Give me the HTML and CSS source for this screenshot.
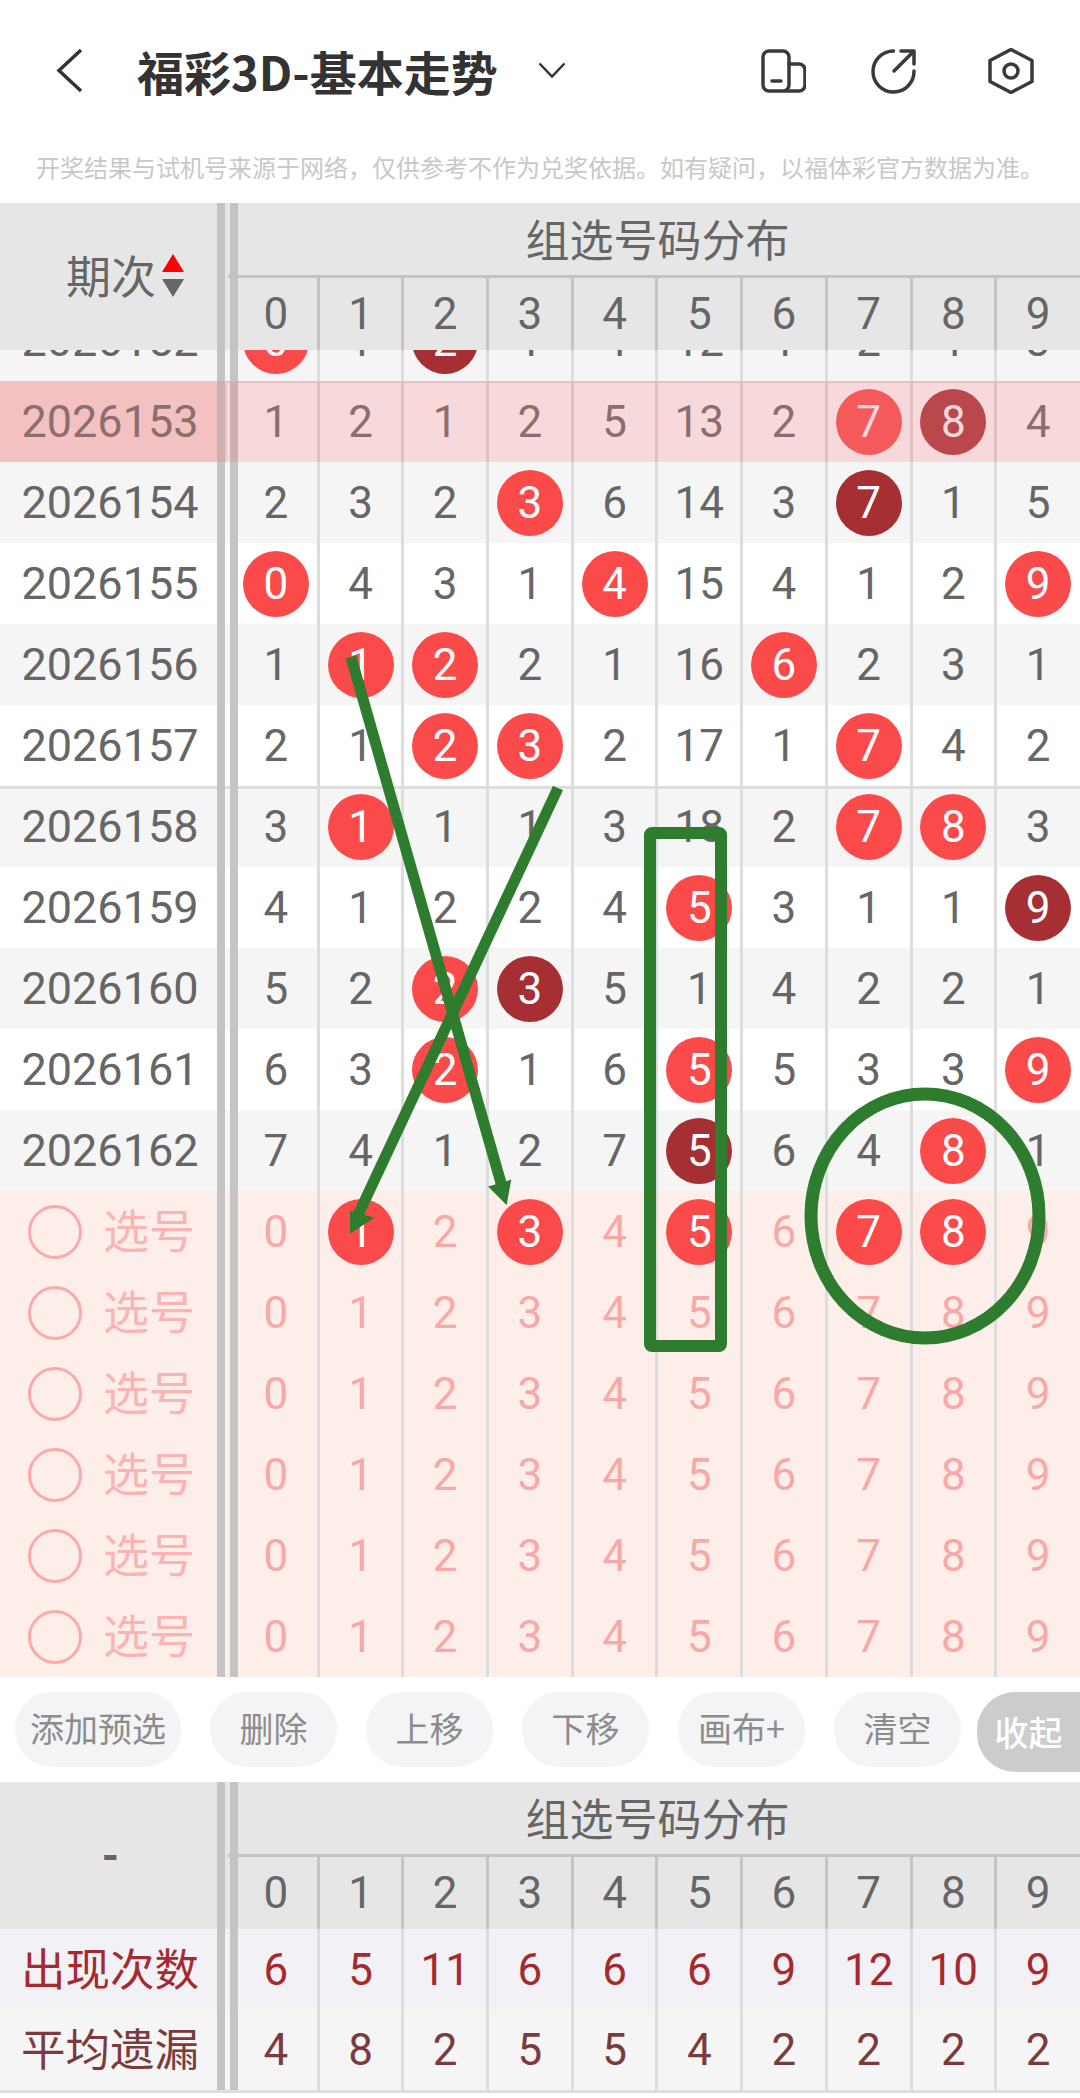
FILE: index.html
```html
<!DOCTYPE html>
<html lang="zh-CN">
<head>
<meta charset="utf-8">
<title>福彩3D-基本走势</title>
<link rel="stylesheet" href="styles.css">
</head>
<body>
<div class="page">
  <header class="topbar">
    <svg class="back" viewBox="0 0 27 45"><path d="M25 2 3 22.5 25 43"/></svg>
    <h1 class="title">福彩3D-基本走势</h1>
    <svg class="caret" viewBox="0 0 28 16"><path d="M1.5 1.5 14 14.5 26.5 1.5"/></svg>
    <div class="actions">
      <svg class="icon" viewBox="0 0 46 46"><rect x="3" y="3" width="26" height="40" rx="6"/><path d="M29 16h10a6 6 0 0 1 6 6v15a6 6 0 0 1-6 6H25"/><path d="M12 33h9"/></svg>
      <svg class="icon" viewBox="0 0 46 46"><path d="M23.500 3A20.500 20.500 0 1 0 44 23"/><path d="M24 23 43 4"/><path d="M31 3h13v13"/></svg>
      <svg class="icon hex" viewBox="0 0 46 46"><path d="M23 1.500 44 12.500V33.500L23 44.500 2 33.500V12.500Z"/><circle cx="23" cy="23" r="7"/></svg>
    </div>
  </header>
  <p class="notice">开奖结果与试机号来源于网络，仅供参考不作为兑奖依据。如有疑问，以福体彩官方数据为准。</p>

  <section class="trend">
    <div class="thead">
      <div class="corner"><span>期次</span><i class="sort"><em class="up"></em><em class="down"></em></i></div>
      <div class="head-right">
        <div class="group">组选号码分布</div>
        <div class="row-nums"><div>0</div><div>1</div><div>2</div><div>3</div><div>4</div><div>5</div><div>6</div><div>7</div><div>8</div><div>9</div></div>
      </div>
    </div>
    <div class="tbody">
      <div class="rows">
        <div class="row alt"><div class="lab">2026152</div><div class="c"><b class="ball">0</b></div><div class="c">1</div><div class="c"><b class="ball dark">2</b></div><div class="c">1</div><div class="c">4</div><div class="c">12</div><div class="c">1</div><div class="c">2</div><div class="c">1</div><div class="c">3</div></div>
        <div class="row hl"><div class="lab">2026153</div><div class="c">1</div><div class="c">2</div><div class="c">1</div><div class="c">2</div><div class="c">5</div><div class="c">13</div><div class="c">2</div><div class="c"><b class="ball">7</b></div><div class="c"><b class="ball dark">8</b></div><div class="c">4</div></div>
        <div class="row alt"><div class="lab">2026154</div><div class="c">2</div><div class="c">3</div><div class="c">2</div><div class="c"><b class="ball">3</b></div><div class="c">6</div><div class="c">14</div><div class="c">3</div><div class="c"><b class="ball dark">7</b></div><div class="c">1</div><div class="c">5</div></div>
        <div class="row"><div class="lab">2026155</div><div class="c"><b class="ball">0</b></div><div class="c">4</div><div class="c">3</div><div class="c">1</div><div class="c"><b class="ball">4</b></div><div class="c">15</div><div class="c">4</div><div class="c">1</div><div class="c">2</div><div class="c"><b class="ball">9</b></div></div>
        <div class="row alt"><div class="lab">2026156</div><div class="c">1</div><div class="c"><b class="ball">1</b></div><div class="c"><b class="ball">2</b></div><div class="c">2</div><div class="c">1</div><div class="c">16</div><div class="c"><b class="ball">6</b></div><div class="c">2</div><div class="c">3</div><div class="c">1</div></div>
        <div class="row"><div class="lab">2026157</div><div class="c">2</div><div class="c">1</div><div class="c"><b class="ball">2</b></div><div class="c"><b class="ball">3</b></div><div class="c">2</div><div class="c">17</div><div class="c">1</div><div class="c"><b class="ball">7</b></div><div class="c">4</div><div class="c">2</div></div>
        <div class="row alt ruled"><div class="lab">2026158</div><div class="c">3</div><div class="c"><b class="ball">1</b></div><div class="c">1</div><div class="c">1</div><div class="c">3</div><div class="c">18</div><div class="c">2</div><div class="c"><b class="ball">7</b></div><div class="c"><b class="ball">8</b></div><div class="c">3</div></div>
        <div class="row"><div class="lab">2026159</div><div class="c">4</div><div class="c">1</div><div class="c">2</div><div class="c">2</div><div class="c">4</div><div class="c"><b class="ball">5</b></div><div class="c">3</div><div class="c">1</div><div class="c">1</div><div class="c"><b class="ball dark">9</b></div></div>
        <div class="row alt"><div class="lab">2026160</div><div class="c">5</div><div class="c">2</div><div class="c"><b class="ball">2</b></div><div class="c"><b class="ball dark">3</b></div><div class="c">5</div><div class="c">1</div><div class="c">4</div><div class="c">2</div><div class="c">2</div><div class="c">1</div></div>
        <div class="row"><div class="lab">2026161</div><div class="c">6</div><div class="c">3</div><div class="c"><b class="ball">2</b></div><div class="c">1</div><div class="c">6</div><div class="c"><b class="ball">5</b></div><div class="c">5</div><div class="c">3</div><div class="c">3</div><div class="c"><b class="ball">9</b></div></div>
        <div class="row alt"><div class="lab">2026162</div><div class="c">7</div><div class="c">4</div><div class="c">1</div><div class="c">2</div><div class="c">7</div><div class="c"><b class="ball dark">5</b></div><div class="c">6</div><div class="c">4</div><div class="c"><b class="ball">8</b></div><div class="c">1</div></div>

        <div class="row pick"><div class="lab"><i class="radio"></i><span>选号</span></div><div class="c">0</div><div class="c"><b class="ball">1</b></div><div class="c">2</div><div class="c"><b class="ball">3</b></div><div class="c">4</div><div class="c"><b class="ball">5</b></div><div class="c">6</div><div class="c"><b class="ball">7</b></div><div class="c"><b class="ball">8</b></div><div class="c">9</div></div>
        <div class="row pick"><div class="lab"><i class="radio"></i><span>选号</span></div><div class="c">0</div><div class="c">1</div><div class="c">2</div><div class="c">3</div><div class="c">4</div><div class="c">5</div><div class="c">6</div><div class="c">7</div><div class="c">8</div><div class="c">9</div></div>
        <div class="row pick"><div class="lab"><i class="radio"></i><span>选号</span></div><div class="c">0</div><div class="c">1</div><div class="c">2</div><div class="c">3</div><div class="c">4</div><div class="c">5</div><div class="c">6</div><div class="c">7</div><div class="c">8</div><div class="c">9</div></div>
        <div class="row pick"><div class="lab"><i class="radio"></i><span>选号</span></div><div class="c">0</div><div class="c">1</div><div class="c">2</div><div class="c">3</div><div class="c">4</div><div class="c">5</div><div class="c">6</div><div class="c">7</div><div class="c">8</div><div class="c">9</div></div>
        <div class="row pick"><div class="lab"><i class="radio"></i><span>选号</span></div><div class="c">0</div><div class="c">1</div><div class="c">2</div><div class="c">3</div><div class="c">4</div><div class="c">5</div><div class="c">6</div><div class="c">7</div><div class="c">8</div><div class="c">9</div></div>
        <div class="row pick"><div class="lab"><i class="radio"></i><span>选号</span></div><div class="c">0</div><div class="c">1</div><div class="c">2</div><div class="c">3</div><div class="c">4</div><div class="c">5</div><div class="c">6</div><div class="c">7</div><div class="c">8</div><div class="c">9</div></div>
      </div>
    </div>
  </section>

  <div class="toolbar">
    <button class="btn wide">添加预选</button>
    <button class="btn">删除</button>
    <button class="btn">上移</button>
    <button class="btn">下移</button>
    <button class="btn">画布+</button>
    <button class="btn">清空</button>
    <button class="collapse">收起</button>
  </div>

  <section class="trend foot">
    <div class="thead">
      <div class="corner dash">-</div>
      <div class="head-right">
        <div class="group">组选号码分布</div>
        <div class="row-nums"><div>0</div><div>1</div><div>2</div><div>3</div><div>4</div><div>5</div><div>6</div><div>7</div><div>8</div><div>9</div></div>
      </div>
    </div>
    <div class="row stat-a"><div class="lab"><span>出现次数</span></div><div class="c">6</div><div class="c">5</div><div class="c">11</div><div class="c">6</div><div class="c">6</div><div class="c">6</div><div class="c">9</div><div class="c">12</div><div class="c">10</div><div class="c">9</div></div>
    <div class="row stat-b"><div class="lab"><span>平均遗漏</span></div><div class="c">4</div><div class="c">8</div><div class="c">2</div><div class="c">5</div><div class="c">5</div><div class="c">4</div><div class="c">2</div><div class="c">2</div><div class="c">2</div><div class="c">2</div></div>
  </section>

  <svg class="marks" viewBox="0 0 1080 2098">
    <path class="ink" d="M351 657 503 1190"/>
    <path class="fill" d="M506 1203 490 1187 510 1181Z"/>
    <path class="ink" d="M558 788 358 1215"/>
    <path class="fill" d="M351 1232 351 1212 372 1218Z"/>
    <rect class="ink box" x="650" y="833" width="71" height="513" rx="2"/>
    <ellipse class="ink ring" cx="925" cy="1216" rx="114" ry="122"/>
  </svg>
</div>
</body>
</html>
```

FILE: styles.css
```css
* { box-sizing: border-box; }
html, body { margin: 0; padding: 0; background: #fff; }
body { font-family: Roboto, "Noto Sans CJK SC", sans-serif; color: #666; }
.page { position: relative; width: 1080px; height: 2098px; overflow: hidden; }

.topbar { height: 140px; display: flex; align-items: center; padding-left: 56px; }
.back { width: 27px; height: 45px; flex: none; fill: none; stroke: #333; stroke-width: 3.5; }
.title { margin: 0 0 0 54px; font: 700 47px/1 "Noto Sans CJK SC", sans-serif; color: #333; white-space: nowrap; }
.caret { width: 28px; height: 16px; flex: none; margin-left: 40px; fill: none; stroke: #333; stroke-width: 2.5; }
.actions { margin-left: auto; margin-top: 2px; display: flex; gap: 64px; padding-right: 46px; }
.icon { width: 46px; height: 46px; fill: none; stroke: #3a3a3a; stroke-width: 3.5; stroke-linecap: round; stroke-linejoin: round; }
.hex { margin-left: 8px; }

.notice { margin: 0; height: 63px; padding-bottom: 9px; display: flex; align-items: center; justify-content: center; font: 400 24px/1 "Noto Sans CJK SC", sans-serif; color: #c8c8c8; white-space: nowrap; }

.trend { position: relative; }
.trend::before, .trend::after { content: ""; position: absolute; top: 0; bottom: 0; width: 8px; background: #c4c4c4; z-index: 1; }
.trend::before { left: 217px; }
.trend::after { left: 230px; }

.thead { height: 147px; display: grid; grid-template-columns: 235px 845px; background: #e6e6e6; }
.corner { display: flex; align-items: center; padding: 0 0 4px 66px; font: 400 45px/1 "Noto Sans CJK SC", sans-serif; color: #666; }
.sort { display: flex; flex-direction: column; gap: 7px; margin-left: 6px; padding-top: 2px; }
.sort em { display: block; width: 0; height: 0; border-left: 11px solid transparent; border-right: 11px solid transparent; }
.sort .up { border-bottom: 18px solid #f00; }
.sort .down { border-top: 18px solid #666; }
.dash { padding: 0 14px 0 0; justify-content: center; font: 700 44px/1 Roboto, sans-serif; }

.head-right { display: flex; flex-direction: column; }
.group { height: 75px; margin-left: -7px; padding: 0 0 3px 7px; display: flex; align-items: center; justify-content: center; border-bottom: 3px solid #c4c4c4; font: 400 44px/1 "Noto Sans CJK SC", sans-serif; color: #666; }
.row-nums { flex: 1; display: grid; grid-template-columns: repeat(10, 84.700px); font-size: 44px; }
.row-nums div { display: flex; align-items: center; justify-content: center; border-right: 3px solid #c4c4c4; }
.row-nums div:last-child { border-right-color: transparent; }

.tbody { height: 1327px; overflow: hidden; }
.rows { margin-top: -50px; }
.row { height: 81px; display: grid; grid-template-columns: 235px repeat(10, 84.700px); font-size: 44px; background: #fff; }
.row.alt { background: #f5f5f5; }
.row.ruled { box-shadow: inset 0 3px 0 #ddd; }
.lab { display: flex; align-items: center; justify-content: center; padding-right: 15px; font-size: 45px; }
.c { display: flex; align-items: center; justify-content: center; border-right: 3px solid #ddd; }
.c:last-child { border-right-color: transparent; }
.ball { width: 66px; height: 66px; flex: none; border-radius: 50%; display: flex; align-items: center; justify-content: center; background: #fa4a4a; color: #fff; font-weight: 400; }
.ball.dark { background: #a52f32; }

.hl { position: relative; box-shadow: inset 0 2px 0 #ddd; }
.hl::after { content: ""; position: absolute; inset: 0; background: rgba(232, 128, 135, .3); z-index: 2; pointer-events: none; }
.hl .lab { background: linear-gradient(to right, #f8dddb 227px, transparent 227px); }

.pick { background: #fdeee9; color: #f9a8a8; }
.pick .lab { justify-content: flex-start; padding: 0 0 0 28px; gap: 21px; font: 400 46px/1 "Noto Sans CJK SC", sans-serif; color: #fbb4b4; }
.pick .lab span { margin-bottom: 7px; }
.radio { width: 54px; height: 54px; flex: none; border: 3px solid #fbaaaa; border-radius: 50%; }

.toolbar { height: 105px; display: flex; gap: 29px; padding: 15px 0 0 15px; }
.btn { width: 127px; height: 75px; flex: none; border: 0; border-radius: 37px; background: #f3f4f6; color: #8c8c8c; font: 400 34px/1 "Noto Sans CJK SC", sans-serif; padding: 0 0 4px; }
.btn.wide { width: 166px; }
.collapse { width: 103px; height: 80px; flex: none; margin-left: -13px; border: 0; border-radius: 38px 0 0 38px; background: #ccc; color: #fff; font: 500 34px/1 "Noto Sans CJK SC", sans-serif; padding: 0; }

.foot { border-bottom: 3px solid #ddd; width: 1080px; }
.stat-a { background: #f1f1f6; color: #a52a2e; }
.stat-b { background: #f5f5f5; color: #7b3b3e; height: 80px; }
.foot .lab { font: 400 44.500px/1 "Noto Sans CJK SC", sans-serif; }
.foot .lab span { margin-bottom: 5px; }

.marks { position: absolute; left: 0; top: 0; width: 1080px; height: 2098px; z-index: 3; pointer-events: none; }
.ink { fill: none; stroke: #2e7d2e; stroke-width: 11; }
.box { stroke-width: 12; }
.ring { stroke-width: 13; }
.fill { fill: #2e7d2e; stroke: #2e7d2e; stroke-width: 2; }
```
